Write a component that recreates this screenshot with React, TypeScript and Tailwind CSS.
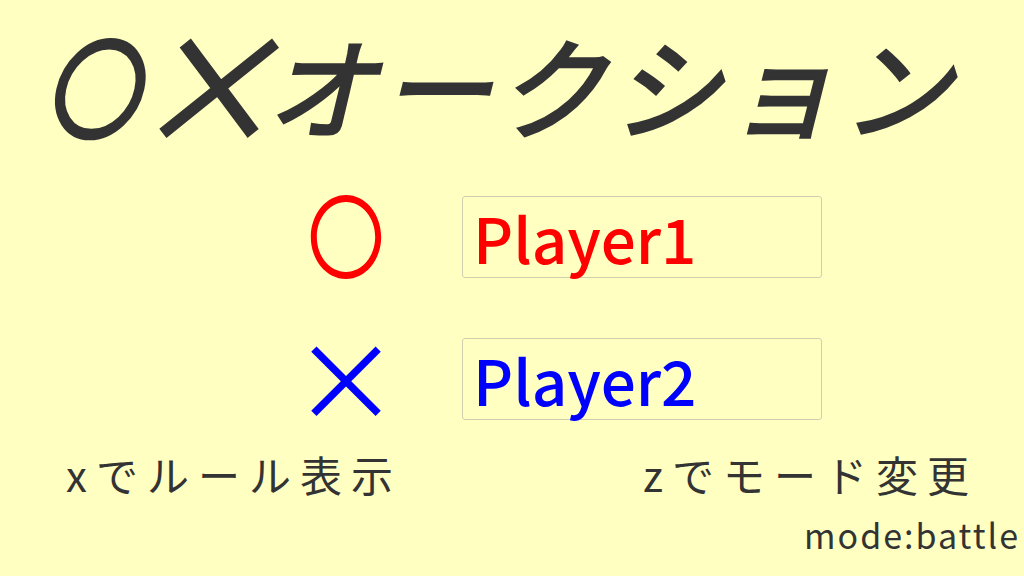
import React from "react";

const jp = { fontFamily: '"Noto Sans CJK JP", "Noto Sans", sans-serif' };

export default function App() {
  return (
    <div
      className="w-[1024px] h-[576px] bg-[#ffffc2] text-[#333333] overflow-hidden flex flex-col"
      style={jp}
    >
      <div className="h-[196px] flex items-start pl-[36px] pt-[18px]">
        <h1 className="text-[110px] leading-[130px] font-normal italic tracking-[5px] whitespace-nowrap [-webkit-text-stroke:3px_#333333]">
          <span className="inline-block scale-x-[0.86]">〇</span>
          <span className="inline-block scale-[1.35] -translate-y-[4px] [-webkit-text-stroke:2px_#333333]">×</span>
          オークション
        </h1>
      </div>
      <div className="flex flex-col gap-[60px] pl-[300px]">
        <div className="flex items-center h-[82px]">
          <div className="w-[92px] flex justify-center text-[#ff0000] text-[78px] leading-none scale-y-[1.18] -translate-y-[5px]">〇</div>
          <div className="ml-[70px] w-[360px] h-[82px] border border-[#cfcfb0] rounded-[3px] flex items-center pl-[10px] text-[#ff0000] text-[62px] leading-none font-medium">
            Player1
          </div>
        </div>
        <div className="flex items-center h-[82px]">
          <div className="w-[92px] flex justify-center text-[#0000ff] text-[108px] leading-none -translate-y-[4px]">×</div>
          <div className="ml-[70px] w-[360px] h-[82px] border border-[#cfcfb0] rounded-[3px] flex items-center pl-[10px] text-[#0000ff] text-[62px] leading-none font-medium">
            Player2
          </div>
        </div>
      </div>
      <div className="flex pt-[30px]">
        <div className="pl-[66px] w-[643px] text-[42px] leading-[48px] tracking-[9px] whitespace-nowrap">xでルール表示</div>
        <div className="text-[42px] leading-[48px] tracking-[9px] whitespace-nowrap">zでモード変更</div>
      </div>
      <div className="flex justify-end pr-[4px] pt-[17px] text-[34px] leading-[40px] tracking-[2px]">mode:battle</div>
    </div>
  );
}
